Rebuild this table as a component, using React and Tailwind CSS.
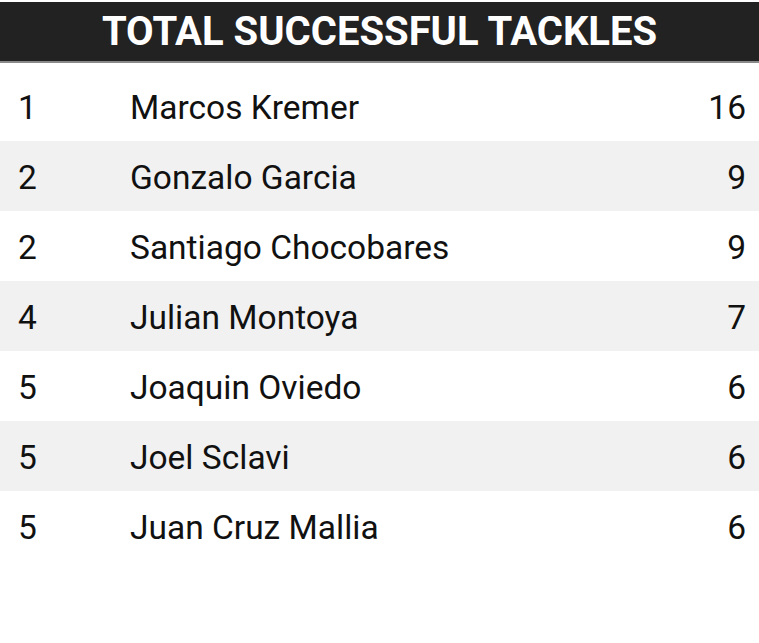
const ROWS = [
  { rank: 1, name: 'Marcos Kremer', value: 16 },
  { rank: 2, name: 'Gonzalo Garcia', value: 9 },
  { rank: 2, name: 'Santiago Chocobares', value: 9 },
  { rank: 4, name: 'Julian Montoya', value: 7 },
  { rank: 5, name: 'Joaquin Oviedo', value: 6 },
  { rank: 5, name: 'Joel Sclavi', value: 6 },
  { rank: 5, name: 'Juan Cruz Mallia', value: 6 },
];

export default function App() {
  return (
    <div className="h-[643px] w-[759px] bg-white pt-[2px] font-['Roboto',sans-serif] text-[#111]">
      <div className="flex h-[61px] items-center justify-center border-b-2 border-[#8a8a8a] bg-[#222222]">
        <h1 className="text-[40px] font-bold leading-none text-white">TOTAL SUCCESSFUL TACKLES</h1>
      </div>
      <div className="mt-[8px]">
        {ROWS.map((r, i) => (
          <div
            key={i}
            className={`flex h-[70px] items-center pt-[4px] text-[33.5px] ${i % 2 === 1 ? 'bg-[#f1f1f1]' : 'bg-white'}`}
          >
            <div className="w-[107px] pl-[18px]">{r.rank}</div>
            <div className="flex-1 pl-[23px]">{r.name}</div>
            <div className="w-[200px] pr-[13px] text-right">{r.value}</div>
          </div>
        ))}
      </div>
    </div>
  );
}
